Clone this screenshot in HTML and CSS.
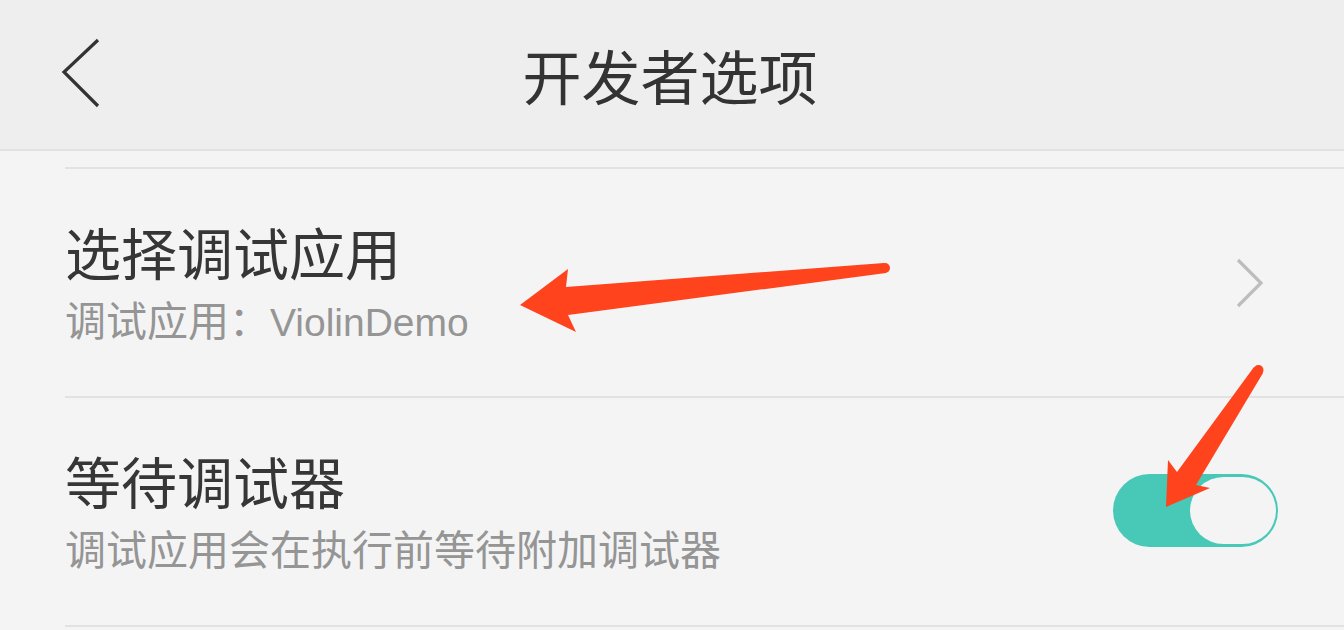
FILE: index.html
```html
<!DOCTYPE html>
<html lang="zh-CN">
<head>
<meta charset="utf-8">
<title>开发者选项</title>
<link rel="stylesheet" href="styles.css">
</head>
<body>
<div class="page">
  <header class="topbar">
    <div class="back">
      <svg width="44" height="72" viewBox="0 0 44 72"><polyline points="38,3 4,35 38,69" fill="none" stroke="#333" stroke-width="3.2" stroke-linejoin="miter"/></svg>
    </div>
    <h1 class="title">开发者选项</h1>
    <div class="spacer"></div>
  </header>

  <ul class="list">
    <li class="row">
      <div class="texts">
        <div class="row-title">选择调试应用</div>
        <div class="row-sub">调试应用：<span class="latin">ViolinDemo</span></div>
      </div>
      <div class="chev">
        <svg width="32" height="52" viewBox="0 0 32 52"><polyline points="4,3 27,26 4,49" fill="none" stroke="#bdbdbd" stroke-width="3.2"/></svg>
      </div>
    </li>
    <li class="row">
      <div class="texts">
        <div class="row-title">等待调试器</div>
        <div class="row-sub">调试应用会在执行前等待附加调试器</div>
      </div>
      <div class="toggle on"><span class="knob"></span></div>
    </li>
  </ul>

  <svg class="marks" width="1344" height="630" viewBox="0 0 1344 630">
    <polygon points="520,305 568,269 566,287 884,263 886,273 568,315 576,332" fill="#fe431d"/>
    <circle cx="885" cy="268" r="5" fill="#fe431d"/>
    <polygon points="1166,507 1168,460 1177,472 1254,367 1263,373 1196,485 1210,488" fill="#fe431d"/>
    <circle cx="1258.5" cy="370" r="5" fill="#fe431d"/>
  </svg>
</div>
</body>
</html>
```

FILE: styles.css
```css
* { box-sizing: border-box; margin: 0; padding: 0; }
html, body { width: 1344px; height: 630px; overflow: hidden; }
body {
  background: #f4f4f4;
  font-family: "Liberation Sans", "Noto Sans CJK SC", sans-serif;
}
.page { position: relative; width: 1344px; height: 630px; }

.topbar {
  height: 151px;
  background: #eeeeee;
  border-bottom: 2px solid #e2e2e2;
  display: grid;
  grid-template-columns: 1fr auto 1fr;
  align-items: center;
}
.back { padding-left: 60px; display: flex; align-items: center; padding-bottom: 4px; }
.back svg { display: block; }
.title {
  font-family: "Noto Sans CJK SC", sans-serif;
  font-size: 59px;
  font-weight: 400;
  color: #333;
  line-height: 70px;
  margin-left: -4px;
}

.list { list-style: none; margin-top: 16px; padding-left: 65px; }
.row {
  display: flex;
  align-items: center;
  padding-right: 66px;
  border-bottom: 2px solid #e2e2e2;
}
.row:first-child { height: 231px; border-top: 2px solid #e2e2e2; }
.row + .row { height: 229px; }
.texts { flex: 1; padding-top: 6px; }
.row-title {
  font-size: 56px;
  line-height: 64px;
  color: #363636;
}
.row-sub {
  margin-top: 9px;
  font-size: 41px;
  line-height: 50px;
  color: #959595;
}
.latin { font-size: 39px; }
.chev { display: flex; align-items: center; padding-right: 12px; }
.chev svg { display: block; }

.toggle {
  position: relative;
  width: 165px;
  height: 73px;
  border-radius: 37px;
  background: #48c9b7;
  margin-top: -2px;
}
.knob {
  position: absolute;
  right: 2px;
  top: 3px;
  width: 86px;
  height: 67px;
  border-radius: 34px;
  background: #f4f4f4;
}

.marks { position: absolute; left: 0; top: 0; pointer-events: none; }
```
